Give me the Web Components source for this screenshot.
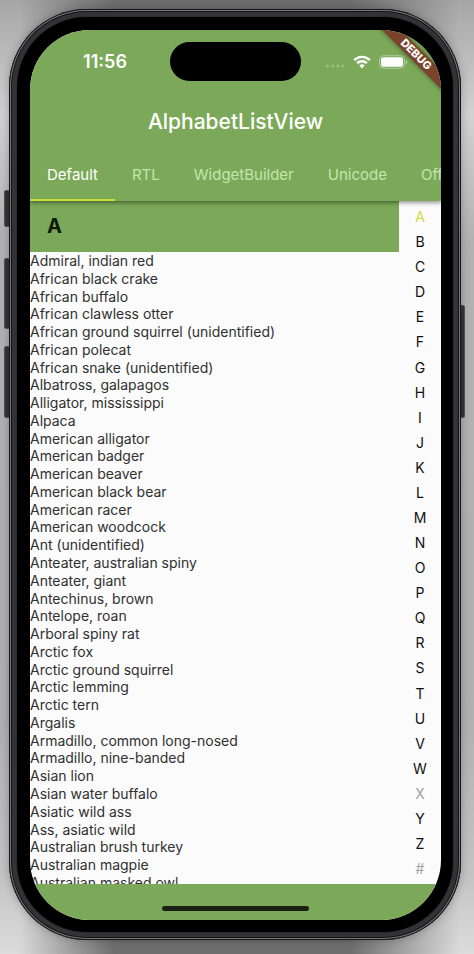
<!DOCTYPE html>
<html lang="en">
<head>
<meta charset="utf-8">
<meta name="viewport" content="width=device-width, initial-scale=1">
<title>AlphabetListView</title>
<style>
  :root {
    --green: #7ca959;
    --lime: #cddc39;
    --surface: #fbfbfb;
    --ink: #111;
  }
  * { box-sizing: border-box; }
  body {
    margin: 0;
    min-height: 100vh;
    display: flex;
    padding: 9px 13px 14px 9px;
    font-family: Inter, "Liberation Sans", sans-serif;
    font-size: 14px;
    background:
      linear-gradient(to right, transparent 4%, #6e6e6e 24%, #6e6e6e 74%, transparent 97%),
      linear-gradient(#a6a6a6 0, #d2d2d2 12%, #b2b2b2 25%, #b0b0b0 75%, #c4c4c4 92%, #dcdcdc 100%);
  }
</style>
</head>
<body>
<phone-frame>
  <app-screen>
    <app-bar slot="bar" heading="AlphabetListView">
      <status-bar slot="status" time="11:56"></status-bar>
      <tab-strip slot="tabs" labels="Default|RTL|WidgetBuilder|Unicode|Offset"></tab-strip>
    </app-bar>
    <alphabet-list slot="list" letter="A"></alphabet-list>
    <alphabet-index slot="index" active="A" disabled-letters="X#"></alphabet-index>
    <debug-banner slot="overlay">DEBUG</debug-banner>
  </app-screen>
</phone-frame>

<script>
const RESET = '*{box-sizing:border-box}button{font:inherit;color:inherit;background:none;border:0;margin:0;padding:0;cursor:pointer}ul,ol{list-style:none;margin:0;padding:0}';

const define = (name, render) => customElements.define(name, class extends HTMLElement {
  constructor() {
    super();
    this.attachShadow({ mode: 'open' });
  }
  connectedCallback() {
    this.shadowRoot.innerHTML = '<style>' + RESET + '</style>' + render(this);
  }
});

define('phone-frame', () => `
  <style>
    :host {
      position: relative; z-index: 0; flex: 1; min-width: 0; display: flex; 
    }
    .body {
      flex: 1; min-width: 0; display: flex; padding: 8px;
      border-radius: 78px;
      background: #2d2d2f;
      box-shadow: inset 0 0 0 1px #161616, inset 0 0 0 2px #77787a, inset 0 0 0 3px #121212, inset 0 0 0 7px #333335, 0 0 10px #0004;
    }
    .bezel { flex: 1; min-width: 0; display: flex; background: #000; border-radius: 70px; padding: 13px 12px 12px 13px; }
    .key { position: absolute; width: 6px; background: #353537; border: 1px solid #555; border-radius: 2px; z-index: -1; }
    .left { left: -5px; }
    .right { right: -4px; top: 296px; height: 113px; }
    .mute { top: 181px; height: 37px; }
    .up { top: 249px; height: 71px; }
    .down { top: 337px; height: 72px; }
  </style>
  <span class="key left mute"></span><span class="key left up"></span>
  <span class="key left down"></span><span class="key right"></span>
  <div class="body"><div class="bezel"><slot></slot></div></div>`);

define('app-screen', () => `
  <style>
    :host {
      position: relative; flex: 1; min-width: 0; display: flex; flex-direction: column;
      overflow: hidden; border-radius: 60px; background: var(--surface);
    }
    main { flex: 1; min-height: 0; display: flex; }
    slot[name=list]::slotted(*) { flex: 1; min-width: 0; }
    footer { height: 36px; background: var(--green); display: flex; justify-content: center; align-items: flex-end; padding-bottom: 9px; }
    .home { width: 36%; height: 5px; border-radius: 3px; background: #1b2013; }
  </style>
  <slot name="bar"></slot>
  <main><slot name="list"></slot><slot name="index"></slot></main>
  <footer><span class="home"></span></footer>
  <slot name="overlay"></slot>`);

define('app-bar', host => `
  <style>
    :host {
      position: relative; z-index: 1; display: block; background: var(--green); color: #fff;
      box-shadow: 0 2px 4px #0006;
    }
    h1 { margin: 0; height: 56px; padding-top: 1px; line-height: 56px; text-align: center; font-size: 21px; font-weight: 500; }
  </style>
  <header>
    <slot name="status"></slot>
    <h1>${host.getAttribute('heading')}</h1>
    <slot name="tabs"></slot>
  </header>`);

define('status-bar', host => `
  <style>
    :host { display: grid; grid-template-columns: 1fr 131px 1fr; align-items: center; height: 63px; }
    time { font-size: 18px; font-weight: 600; justify-self: center; padding-left: 10px; }
    .island { height: 39px; border-radius: 20px; background: #000; }
    .icons { display: flex; align-items: center; gap: 8px; padding-left: 24px; }
    svg { display: block; flex: none; }
  </style>
  <time>${host.getAttribute('time')}</time>
  <span class="island"></span>
  <span class="icons">
    <svg width="20" height="14" viewBox="0 0 20 14" fill="#fff" fill-opacity=".25" aria-hidden="true">
      <circle cx="2.5" cy="11" r="1.6"/><circle cx="7.7" cy="11" r="1.6"/><circle cx="12.9" cy="11" r="1.6"/><circle cx="18" cy="11" r="1.6"/>
    </svg>
    <svg width="18" height="14" viewBox="0 0 18 14" aria-hidden="true">
      <g fill="none" stroke="#fff" stroke-width="2.4">
        <path d="M1.2 5.1a11 11 0 0 1 15.6 0"/><path d="M4.1 8.2a7 7 0 0 1 9.8 0"/>
      </g>
      <path fill="#fff" d="M9 13.4 6.3 10.5a3.9 3.9 0 0 1 5.4 0Z"/>
    </svg>
    <svg width="29" height="14" viewBox="0 0 29 14" aria-hidden="true">
      <rect x=".5" y=".7" width="25" height="12.6" rx="4" fill="none" stroke="#fff" stroke-opacity=".4"/>
      <rect x="2" y="2.2" width="22" height="9.6" rx="2.6" fill="#fff"/>
      <path fill="#fff" fill-opacity=".45" d="M26.8 4.8c2.2.7 2.2 3.7 0 4.4Z"/>
    </svg>
  </span>`);

define('tab-strip', host => `
  <style>
    :host { display: block; overflow: hidden; }
    div { display: flex; }
    button { flex: none; height: 52px; padding: 0 17px; font-size: 15px; color: #c4e5ae; border-bottom: 2px solid transparent; }
    button[aria-selected=true] { color: #fff; border-color: var(--lime); }
  </style>
  <div role="tablist">${host.getAttribute('labels').split('|').map((t, i) =>
    `<button role="tab" aria-selected="${i === 0}">${t}</button>`).join('')}</div>`);

const ANIMALS = [
  'Admiral, indian red', 'African black crake', 'African buffalo', 'African clawless otter',
  'African ground squirrel (unidentified)', 'African polecat', 'African snake (unidentified)',
  'Albatross, galapagos', 'Alligator, mississippi', 'Alpaca', 'American alligator',
  'American badger', 'American beaver', 'American black bear', 'American racer',
  'American woodcock', 'Ant (unidentified)', 'Anteater, australian spiny', 'Anteater, giant',
  'Antechinus, brown', 'Antelope, roan', 'Arboral spiny rat', 'Arctic fox',
  'Arctic ground squirrel', 'Arctic lemming', 'Arctic tern', 'Argalis',
  'Armadillo, common long-nosed', 'Armadillo, nine-banded', 'Asian lion',
  'Asian water buffalo', 'Asiatic wild ass', 'Ass, asiatic wild', 'Australian brush turkey',
  'Australian magpie', 'Australian masked owl'
];

define('alphabet-list', host => `
  <style>
    :host { display: flex; flex-direction: column; min-height: 0; overflow: hidden; }
    h2 { flex: none; margin: 0; height: 51px; line-height: 51px; padding-left: 17px; font-size: 20px; font-weight: 700; color: #0d1a06; background: var(--green); }
    .rows { flex: 1; min-height: 0; overflow: hidden; }
    ul { display: flex; flex-direction: column; justify-content: space-between; height: calc(100% + 7px); }
    li { line-height: 17px; white-space: nowrap; color: #303030; }
  </style>
  <h2>${host.getAttribute('letter')}</h2>
  <div class="rows"><ul>${ANIMALS.map(a => `<li>${a}</li>`).join('')}</ul></div>`);

define('alphabet-index', host => `
  <style>
    :host { flex: none; display: block; width: 42px; }
    nav { height: 100%; display: flex; flex-direction: column; padding: 3px 0; }
    button { flex: 1 1 0; min-height: 0; line-height: 17px; color: var(--ink); }
    button[aria-current] { color: var(--lime); }
    button:disabled { color: #a2a2a2; }
  </style>
  <nav aria-label="Alphabet">${[...'ABCDEFGHIJKLMNOPQRSTUVWXYZ#'].map(c =>
    `<button${c === host.getAttribute('active') ? ' aria-current="true"' : ''}${host.getAttribute('disabled-letters').includes(c) ? ' disabled' : ''}>${c}</button>`).join('')}</nav>`);

define('debug-banner', () => `
  <style>
    :host {
      position: absolute; z-index: 2; top: 18px; right: -35px; width: 120px; height: 13px;
      line-height: 13px; text-align: center; font-size: 11px; font-weight: 800; color: #fff;
      background: #7a432c; box-shadow: 0 0 5px #0008; transform: rotate(45deg);
    }
  </style>
  <slot></slot>`);
</script>
</body>
</html>
